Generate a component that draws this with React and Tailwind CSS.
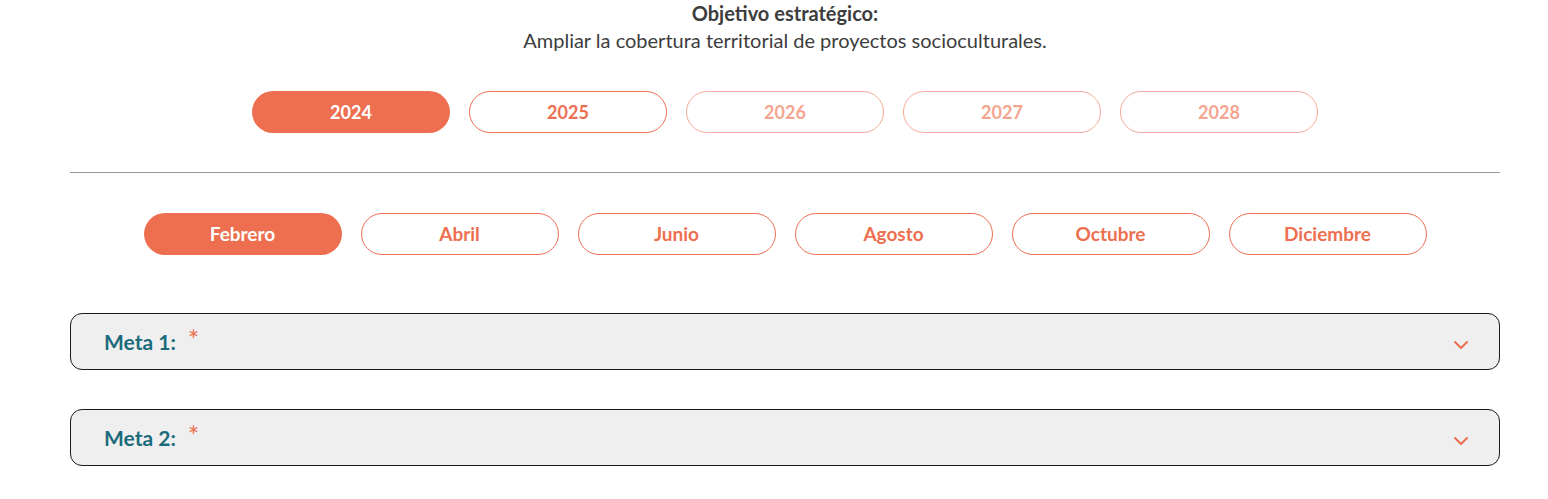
import React from "react";

const years = ["2024", "2025", "2026", "2027", "2028"];
const months = ["Febrero", "Abril", "Junio", "Agosto", "Octubre", "Diciembre"];

const Chevron = () => (
  <svg width="16" height="10" viewBox="0 0 16 10" fill="none">
    <path d="M2 2l6 6 6-6" stroke="#ee6f50" strokeWidth="2" strokeLinecap="round" strokeLinejoin="round" />
  </svg>
);

const Meta = ({ n }) => (
  <div className="flex items-center justify-between h-[57px] rounded-[12px] border border-[#1a1a1a] bg-[#efefef] pl-[33px] pr-[30px]">
    <div className="flex items-start">
      <span className="text-[21px] font-bold text-[#1b6b7b]">Meta {n}:</span>
      <span className="ml-[12px] -mt-[4px] text-[27px] leading-[36px] text-[#ee6f50]">*</span>
    </div>
    <div className="mt-[6px]">
      <Chevron />
    </div>
  </div>
);

export default function App() {
  return (
    <div className="bg-white w-[1548px] h-[499px] font-['Lato','Liberation_Sans',sans-serif]">
      <div className="ml-[70px] w-[1430px]">
        <div className="text-center text-[20px] leading-[27px] text-[#3d3d3d]">
          <p className="font-bold">Objetivo estratégico:</p>
          <p>Ampliar la cobertura territorial de proyectos socioculturales.</p>
        </div>

        <div className="flex justify-center gap-[19px] mt-[37px]">
          {years.map((y, i) => (
            <button
              key={y}
              className={
                i === 0
                  ? "w-[198px] h-[42px] rounded-full bg-[#ee6f50] text-white text-[18px] font-bold"
                  : i === 1
                  ? "w-[198px] h-[42px] rounded-full border border-[#ee6f50] text-[#ee6f50] text-[18px] font-bold"
                  : "w-[198px] h-[42px] rounded-full border border-[#f6ab98] text-[#f5a48f] text-[18px] font-bold"
              }
            >
              {y}
            </button>
          ))}
        </div>

        <hr className="mt-[39px] border-0 h-px bg-[#9a9a9a]" />

        <div className="flex justify-center gap-[19px] mt-[40px]">
          {months.map((m, i) => (
            <button
              key={m}
              className={
                i === 0
                  ? "w-[198px] h-[42px] rounded-full bg-[#ee6f50] text-white text-[19px] font-bold"
                  : "w-[198px] h-[42px] rounded-full border border-[#ee6f50] text-[#ee6f50] text-[19px] font-bold"
              }
            >
              {m}
            </button>
          ))}
        </div>

        <div className="mt-[58px] flex flex-col gap-[39px]">
          <Meta n={1} />
          <Meta n={2} />
        </div>
      </div>
    </div>
  );
}
